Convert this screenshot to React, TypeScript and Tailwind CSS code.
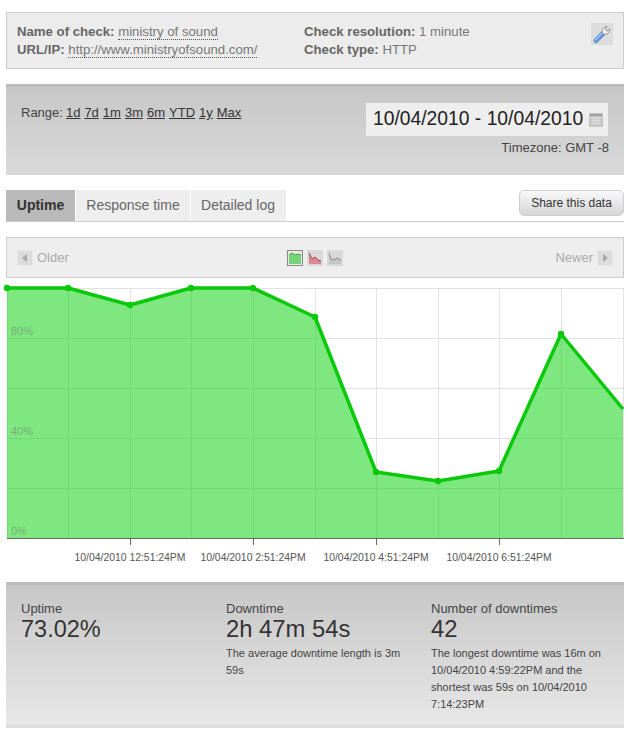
const ranges = ["1d", "7d", "1m", "3m", "6m", "YTD", "1y", "Max"]

const points: [number, number][] = [
  [1, 1], [62, 1], [124, 18], [185, 1], [247, 1], [309, 30],
  [370, 185], [432, 194], [493, 184], [555, 47], [617, 122],
]
const linePath = points.map((p) => p.join(",")).join(" ")
const gridX = [1, 62, 124, 185, 247, 309, 370, 432, 493, 555, 617]
const gridY = [1, 51, 101, 151, 201]

function ArrowButton({ dir }: { dir: "left" | "right" }) {
  return (
    <svg width="16" height="16" viewBox="0 0 16 16" className="block">
      <rect width="16" height="16" fill="#dcdcdc" />
      <rect x="0.5" y="0.5" width="15" height="15" fill="none" stroke="#e8e8e8" />
      <path d={dir === "left" ? "M10 4v8L5 8z" : "M6 4v8l5-4z"} fill="#a8a8a8" />
    </svg>
  )
}

function Chart() {
  return (
    <svg width="622" height="282" viewBox="0 0 622 282" className="block overflow-visible">
      {gridX.map((x) => (
        <line key={x} x1={x + 0.5} x2={x + 0.5} y1="1" y2="251" stroke="#e2e2e2" />
      ))}
      {gridY.map((y) => (
        <line key={y} x1="1" x2="618" y1={y + 0.5} y2={y + 0.5} stroke="#e2e2e2" />
      ))}
      <polygon points={`1,251 ${linePath} 617,251`} fill="#00d000" fillOpacity="0.5" />
      <polyline points={linePath} fill="none" stroke="#0ac80a" strokeWidth="3.5" strokeLinejoin="round" />
      {points.slice(0, 10).map(([x, y]) => (
        <circle key={x} cx={x} cy={y} r="3.2" fill="#0ac80a" />
      ))}
      <line x1="1" x2="618" y1="251.5" y2="251.5" stroke="#666" />
      {[124, 247, 370, 493].map((x) => (
        <line key={x} x1={x + 0.5} x2={x + 0.5} y1="252" y2="258" stroke="#666" />
      ))}
      <g fontSize="11" fill="#78ae78" fontFamily="'Liberation Sans', sans-serif">
        <text x="5" y="48">80%</text>
        <text x="5" y="148">40%</text>
        <text x="5" y="248">0%</text>
      </g>
      <g fontSize="10.4" fill="#555" textAnchor="middle" fontFamily="'Liberation Sans', sans-serif">
        <text x="124" y="274">10/04/2010 12:51:24PM</text>
        <text x="247" y="274">10/04/2010 2:51:24PM</text>
        <text x="370" y="274">10/04/2010 4:51:24PM</text>
        <text x="493" y="274">10/04/2010 6:51:24PM</text>
      </g>
    </svg>
  )
}

export default function App() {
  return (
    <div className="w-[628px] h-[736px] overflow-hidden bg-white pl-[6px] pr-[4px] pt-[12px] font-['Liberation_Sans',Arial,sans-serif] text-[#333]">
      {/* Check info */}
      <div className="flex h-[57px] border border-[#cccccc] bg-[#ececec] pl-[10px] pr-[10px] pt-[10px] text-[13.2px] leading-[18px] text-[#777]">
        <div className="w-[287px]">
          <div>
            <b className="text-[#666]">Name of check:</b>{" "}
            <span className="border-b border-dotted border-[#555]">ministry of sound</span>
          </div>
          <div>
            <b className="text-[#666]">URL/IP:</b>{" "}
            <span className="border-b border-dotted border-[#555]">http://www.ministryofsound.com/</span>
          </div>
        </div>
        <div className="flex-1">
          <div>
            <b className="text-[#666]">Check resolution:</b> 1 minute
          </div>
          <div>
            <b className="text-[#666]">Check type:</b> HTTP
          </div>
        </div>
        <svg width="22" height="22" viewBox="0 0 22 22" className="block">
          <rect width="22" height="22" fill="#dcdcdc" />
          <path d="M5 17.5 L12 10.5" stroke="#5b8fd6" strokeWidth="5" strokeLinecap="round" />
          <path d="M4.5 17 L11 10.5" stroke="#a9c8f0" strokeWidth="1.5" strokeLinecap="round" />
          <path d="M11.5 10 C10.5 6.5 12.5 3.5 16 3.5 L14 6.3 L16 8.3 L18.8 6 C19 9.5 16 12 13 11" fill="#f4f4f4" stroke="#8a8a8a" strokeWidth="1" />
        </svg>
      </div>

      {/* Range */}
      <div className="mt-[15px] flex h-[91px] justify-between border-t-[3px] border-[#bcbcbc] bg-gradient-to-b from-[#c7c7c7] to-[#d9d9d9] pl-[15px] pr-[16px] pt-[16px]">
        <div className="mt-px flex gap-[4px] text-[13px] leading-[18px] text-[#444]">
          <span className="mr-[-1px]">Range:</span>
          {ranges.map((r) => (
            <span key={r} className="underline text-[#333]">{r}</span>
          ))}
        </div>
        <div className="flex flex-col items-end">
          <div className="flex h-[33px] w-[242px] items-center gap-[6px] bg-[#eeeeee] pl-[7px] text-[19.3px] text-[#222]">
            <span>10/04/2010 - 10/04/2010</span>
            <svg width="14" height="14" viewBox="0 0 14 14" className="block">
              <rect width="14" height="14" fill="#c4c4c4" />
              <rect x="1" y="1" width="12" height="2" fill="#a0a0a0" />
              <path d="M2 5h10M2 7.5h10M2 10h10" stroke="#dedede" />
              <path d="M4 4v8M7 4v8M10 4v8" stroke="#dedede" />
            </svg>
          </div>
          <div className="mt-[3px] mr-[-1px] text-[13px] leading-[18px] text-[#444]">Timezone: GMT -8</div>
        </div>
      </div>

      {/* Tabs */}
      <div className="mt-[15px] flex h-[32px] border-b border-[#cccccc] text-[14px]">
        <div className="flex w-[69px] items-center justify-center bg-[#b9b9b9] font-bold text-[#333]">Uptime</div>
        <div className="ml-px flex w-[114px] items-center justify-center bg-[#eeeeee] text-[#666]">Response time</div>
        <div className="ml-px flex w-[95px] items-center justify-center bg-[#eeeeee] pr-px text-[#666]">Detailed log</div>
        <div className="ml-auto flex h-[26px] w-[105px] items-center justify-center rounded-[5px] border border-[#cfcfcf] bg-gradient-to-b from-[#f8f8f8] to-[#d6d6d6] text-[12px] text-[#333]">
          Share this data
        </div>
      </div>

      {/* Pager */}
      <div className="mt-[15px] flex h-[41px] items-center border border-[#cccccc] bg-[#eeeeee] px-[10px] text-[13px] text-[#aaa]">
        <div className="flex w-[270px] items-center gap-[4px]">
          <ArrowButton dir="left" />
          <span>Older</span>
        </div>
        <div className="flex gap-[4px]">
          <svg width="16" height="16" viewBox="0 0 16 16" className="block">
            <rect width="16" height="16" fill="#e8e8e8" />
            <path d="M2 14V5l3-2 3 2 3-1 3 1v9z" fill="#77d577" />
            <path d="M2 5l3-2 3 2 3-1 3 1" fill="none" stroke="#39a839" />
            <rect x="0.5" y="0.5" width="15" height="15" fill="none" stroke="#888" />
          </svg>
          <svg width="16" height="16" viewBox="0 0 16 16" className="block">
            <rect width="16" height="16" fill="#d8d8d8" />
            <path d="M2 14V3l3 6 3-2 3 3 3 1v3z" fill="#d98a96" />
            <path d="M2 3l3 6 3-2 3 3 3 1" fill="none" stroke="#b03a4c" />
          </svg>
          <svg width="16" height="16" viewBox="0 0 16 16" className="block">
            <rect width="16" height="16" fill="#d8d8d8" />
            <path d="M2 14V3l2 6 3 1 3-2 4 2v4z" fill="#c4c4c4" />
            <path d="M2 3l2 6 3 1 3-2 4 2" fill="none" stroke="#8c8c8c" />
          </svg>
        </div>
        <div className="ml-auto flex items-center gap-[4px]">
          <span>Newer</span>
          <ArrowButton dir="right" />
        </div>
      </div>

      {/* Chart */}
      <div className="mt-[9px]">
        <Chart />
      </div>

      {/* Stats */}
      <div className="mt-[13px] grid h-[146px] grid-cols-[205px_205px_1fr] border-t-[3px] border-b-[3px] border-t-[#bcbcbc] border-b-[#dddddd] bg-gradient-to-b from-[#c7c7c7] to-[#e7e7e7] pl-[15px] pr-[15px] pt-[16px] text-[#333]">
        <div>
          <div className="text-[13px] leading-[15px] text-[#444]">Uptime</div>
          <div className="text-[23.5px] leading-[26px]">73.02%</div>
        </div>
        <div>
          <div className="text-[13px] leading-[15px] text-[#444]">Downtime</div>
          <div className="text-[23.8px] leading-[26px]">2h 47m 54s</div>
          <p className="mt-[3px] w-[180px] text-[11px] leading-[17px] text-[#444]">The average downtime length is 3m 59s</p>
        </div>
        <div>
          <div className="text-[13px] leading-[15px] text-[#444]">Number of downtimes</div>
          <div className="text-[23.8px] leading-[26px]">42</div>
          <p className="mt-[3px] w-[180px] text-[11px] leading-[17px] text-[#444]">
            The longest downtime was 16m on 10/04/2010 4:59:22PM and the shortest was 59s on 10/04/2010 7:14:23PM
          </p>
        </div>
      </div>
    </div>
  )
}
